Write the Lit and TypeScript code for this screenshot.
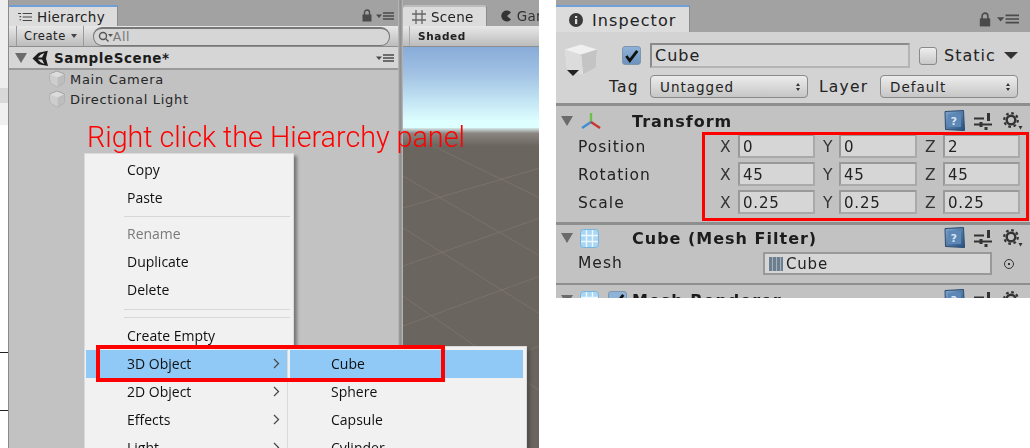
import {LitElement, html, css, svg} from 'lit';
import {customElement} from 'lit/decorators.js';

const cube = html`<svg class="cube" width="18" height="18" viewBox="0 0 18 18">
  <path d="M9 1 16.500 4 16 13 9.500 17 2.500 13 1.500 4Z" fill="#dcdcdc" stroke="#a4a4a4"/>
  <path d="M1.500 4 9.500 7.500V17L2.500 13Z" fill="#cdcdcd"/>
  <path d="M9.500 7.500 16.500 4 16 13 9.500 17Z" fill="#bdbdbd"/>
</svg>`;

const unityLogo = html`<svg width="17" height="17" viewBox="0 0 17 17">
  <path d="M.5 8.500 6.500 2.800 9 4.600 5.800 7.400H10L12.300 3 9 4.500 6.500 2.800 15.800.8 14 8.500 16 16 6.500 14.200 9 12.400 12.300 14 10 9.600H5.800L9 12.400 6.500 14.200Z" fill="#1c1c1c"/>
</svg>`;

const lock = html`<svg width="10" height="13" viewBox="0 0 10 13">
  <path d="M2.500 6V3.500a2.500 2.500 0 0 1 5 0V6" fill="none" stroke="#4a4a4a" stroke-width="1.400"/>
  <rect x=".5" y="5.500" width="9" height="7" fill="#4a4a4a"/>
</svg>`;

const paneMenu = html`<svg width="18" height="8" viewBox="0 0 18 8">
  <path d="M0 2.500H6L3 6Z" fill="#4a4a4a"/>
  <path d="M7 1H18M7 4H18M7 7H18" stroke="#4a4a4a" stroke-width="1.300"/>
</svg>`;

const gear = html`<svg width="20" height="19" viewBox="0 0 20 19">
  <circle cx="8" cy="8" r="4.300" fill="none" stroke="#333" stroke-width="2.400"/>
  <circle cx="8" cy="8" r="6.800" fill="none" stroke="#333" stroke-width="2.200" stroke-dasharray="2.700 2.640"/>
  <path d="M15.500 14H19.500L17.500 17.500Z" fill="#333"/>
</svg>`;

const sliders = html`<svg width="18" height="17" viewBox="0 0 18 17">
  <path d="M0 5.500H10M0 11.500H18" stroke="#333" stroke-width="2"/>
  <path d="M14.500 0V8M12 14V17M7 9V14" stroke="#333" stroke-width="3"/>
</svg>`;

const help = html`<svg width="21" height="22" viewBox="0 0 21 22">
  <defs><linearGradient id="hb" x1="0" y1="0" x2="1" y2="1">
    <stop offset="0" stop-color="#7ea7d1"/><stop offset="1" stop-color="#26507f"/>
  </linearGradient></defs>
  <path d="M1 1.500 19.500.5 20.500 20.500 1.500 19.500Z" fill="url(#hb)" stroke="#2c4a6e"/>
  <rect x="4" y="4" width="13" height="13" fill="#5d88b6"/>
  <text x="10.500" y="15" font-size="11" font-family="DejaVu Sans" fill="#dbe7f3" text-anchor="middle">?</text>
</svg>`;

const meshIcon = html`<svg width="19" height="19" viewBox="0 0 19 19">
  <rect x=".5" y=".5" width="18" height="18" rx="3" fill="#a9d6f2" stroke="#76b4e0"/>
  <path d="M6.500 1V18M12.500 1V18M1 6.500H18M1 12.500H18" stroke="#eef8ff" stroke-width="1.400"/>
</svg>`;

const transformIcon = html`<svg width="22" height="20" viewBox="0 0 22 20">
  <path d="M11 11V2" stroke="#6cc04a" stroke-width="2.400"/>
  <path d="M11 11 2 17" stroke="#3f8fd2" stroke-width="2.400"/>
  <path d="M11 11 20 17" stroke="#c8342e" stroke-width="2.400"/>
</svg>`;

const tick = html`<svg width="15" height="14" viewBox="0 0 13 12">
  <path d="M2 6 5 10 11.500 1.500" fill="none" stroke="#111" stroke-width="2.400"/>
</svg>`;

const chevron = html`<svg width="7" height="11" viewBox="0 0 7 11">
  <path d="M1 1 5.500 5.500 1 10" fill="none" stroke="#4a4a4a" stroke-width="1.300"/>
</svg>`;

const gridLines = [
  'M0 62 137 22', 'M0 120 137 72', 'M0 180 137 130', 'M0 250 137 200',
  'M30 0 137 52', 'M0 30 137 110', 'M0 82 137 168', 'M0 150 137 245', 'M0 225 60 270',
].map((d) => svg`<path d=${d} stroke="#7a726a" stroke-width="1" fill="none"/>`);

const mainMenu = [
  {label: 'Copy'},
  {label: 'Paste'},
  {sep: 'one'},
  {label: 'Rename', off: true},
  {label: 'Duplicate'},
  {label: 'Delete'},
  {sep: 'two'},
  {sep: 'three'},
  {label: 'Create Empty'},
  {label: '3D Object', sub: true, on: true},
  {label: '2D Object', sub: true},
  {label: 'Effects', sub: true},
  {label: 'Light', sub: true},
];

const subMenu = ['Cube', 'Sphere', 'Capsule', 'Cylinder'];

const vectors = [
  {name: 'Position', v: ['0', '0', '2']},
  {name: 'Rotation', v: ['45', '45', '45']},
  {name: 'Scale', v: ['0.25', '0.25', '0.25']},
];

@customElement('app-root')
export class AppRoot extends LitElement {
  static styles = css`
    :host {
      display: flex;
      gap: 17px;
      width: 1030px;
      height: 448px;
      overflow: hidden;
      background: #fff;
      font-family: 'DejaVu Sans', sans-serif;
      color: #222;
    }
    .shot {
      position: relative;
      width: 539px;
      height: 448px;
      display: flex;
      flex: none;
      overflow: hidden;
    }
    .soft {
      display: flex;
      flex: 1;
      min-width: 0;
      filter: blur(0.35px);
    }
    .desk {
      width: 8px;
      flex: none;
      display: flex;
      flex-direction: column;
      background: #fff;
      border-right: 1px solid #8a8a8a;
    }
    .desk div { flex: none; }
    .desk .a { height: 88px; background: #eeeeee; }
    .desk .b { height: 15px; background: #d8d8d8; }
    .desk .c { height: 22px; background: #f0f0f0; }
    .desk .d { height: 227px; background: #fff; }
    .desk .line { height: 1px; background: #222; margin-bottom: 57px; }
    .hier {
      width: 389px;
      flex: none;
      display: flex;
      flex-direction: column;
      background: #c2c2c2;
    }
    .gutter {
      width: 5px;
      flex: none;
      background: linear-gradient(90deg, #c2c2c2, #8c8c8c 40%, #9c9c9c 70%, #bdbdbd);
    }
    .scene {
      flex: 1;
      min-width: 0;
      display: flex;
      flex-direction: column;
      background: #6b655f;
    }
    .tabs {
      height: 26px;
      flex: none;
      display: flex;
      align-items: flex-end;
      justify-content: space-between;
      background: #a2a2a2;
      box-sizing: border-box;
    }
    .tab {
      height: 21px;
      box-sizing: border-box;
      display: flex;
      align-items: center;
      gap: 5px;
      background: #dcdcdc;
      border-top: 2px solid #6f9fd6;
      border-right: 1px solid #8c8c8c;
      font-size: 13.500px;
      letter-spacing: 0.3px;
      padding: 0 12px 0 9px;
    }
    .tab.plain { border-top-color: #bdbdbd; border-radius: 3px 3px 0 0; }
    .tab.other {
      background: none;
      border: 0;
      padding: 0 0 0 14px;
      color: #333;
    }
    .tools {
      height: 21px;
      display: flex;
      align-items: center;
      gap: 4px;
      margin: 0 4px 0 0;
    }
    .bar {
      height: 21px;
      flex: none;
      box-sizing: border-box;
      display: flex;
      align-items: center;
      background: linear-gradient(#e8e8e8, #bcbcbc);
      border-bottom: 1px solid #8e8e8e;
      font-size: 11.500px;
      font-weight: 500;
      letter-spacing: 0.6px;
    }
    .create {
      height: 100%;
      display: flex;
      align-items: center;
      gap: 5px;
      margin-left: 7px;
      padding: 0 6px 0 7px;
      border-left: 1px solid #9a9a9a;
      border-right: 1px solid #9a9a9a;
    }
    .caret {
      width: 0;
      height: 0;
      border-left: 3px solid transparent;
      border-right: 3px solid transparent;
      border-top: 4px solid #444;
    }
    .search {
      flex: 1;
      height: 16px;
      margin: 0 8px 0 9px;
      display: flex;
      align-items: center;
      gap: 0;
      padding-left: 4px;
      border: 1px solid #777;
      border-top-width: 2px;
      border-radius: 9px;
      background: #d6d6d6;
      color: #777;
      font-size: 12.500px;
      font-weight: 400;
    }
    .scene-row {
      height: 23px;
      flex: none;
      box-sizing: border-box;
      display: flex;
      align-items: center;
      gap: 5px;
      padding: 1px 4px 0 6px;
      background: #d6d6d6;
      border-bottom: 2px solid #9a9a9a;
      font-size: 13.500px;
      font-weight: 700;
      letter-spacing: 0.55px;
      color: #1c1c1c;
    }
    .scene-row .grow { flex: 1; }
    .tri {
      width: 0;
      height: 0;
      flex: none;
      border-left: 6px solid transparent;
      border-right: 6px solid transparent;
      border-top: 10px solid #6b6b6b;
    }
    .node {
      height: 20px;
      flex: none;
      box-sizing: border-box;
      display: flex;
      align-items: center;
      gap: 4px;
      padding: 0 0 2px 39px;
      font-size: 13px;
      letter-spacing: 0.7px;
      color: #262626;
    }
    .shaded {
      height: 100%;
      display: flex;
      align-items: center;
      padding-left: 8px;
      border-left: 1px solid #a8a8a8;
      margin-left: 6px;
      font-weight: 700;
      font-size: 10.500px;
      letter-spacing: 0.6px;
    }
    .sky {
      height: 81px;
      flex: none;
      background: linear-gradient(#88acd9, #a3c3e4 35%, #ddffff 92%);
    }
    .horizon {
      height: 18px;
      flex: none;
      background: linear-gradient(#d4e8e8, #8a8580 30%, #6b655f);
    }
    .ground { flex: 1; background: #6b655f; overflow: hidden; }
    .ground svg { display: block; }
    .menu {
      position: absolute;
      box-sizing: border-box;
      background: #f1f1f1;
      border: 1px solid #dadada;
      box-shadow: 3px 3px 3px rgba(60, 60, 60, 0.55);
      font-family: 'Open Sans', 'Noto Sans', sans-serif;
      font-size: 14px;
      color: #111;
    }
    .menu.main { left: 84px; top: 153px; width: 210px; height: 320px; padding: 2px 1px; }
    .menu.sub { left: 287px; top: 346px; width: 240px; height: 120px; padding: 3px 3px 3px 2px; }
    .mi {
      height: 28px;
      display: flex;
      align-items: center;
      justify-content: space-between;
      box-sizing: border-box;
      padding: 0 12px 2px 41px;
    }
    .menu.sub .mi { padding-left: 41px; }
    .mi.off { color: #7a7a7a; }
    .mi.on { background: #90c8f6; }
    .ms {
      height: 1px;
      margin-left: 38px;
      margin-right: 2px;
      background: #d7d7d7;
    }
    .ms.one { margin-top: 4px; margin-bottom: 3px; }
    .ms.two { margin-top: 5px; margin-bottom: 7px; }
    .ms.three { margin-bottom: 4px; }
    .note {
      position: absolute;
      left: 87px;
      top: 120px;
      font-family: 'Roboto', 'Liberation Sans', sans-serif;
      font-weight: 300;
      font-size: 28.700px;
      line-height: 34px;
      color: #f00;
      white-space: nowrap;
    }
    .mark {
      position: absolute;
      box-sizing: border-box;
      border: 3px solid #f00;
    }
    .mark.menu-mark { left: 96px; top: 345px; width: 349px; height: 37px; border-width: 4px; }
    .mark.xyz-mark { left: 146px; top: 132px; width: 327px; height: 89px; }

    .insp {
      position: relative;
      flex: none;
      width: 474px;
      height: 298px;
      overflow: hidden;
      background: #c2c2c2;
      display: flex;
      flex-direction: column;
      font-size: 13px;
      letter-spacing: 0.6px;
    }
    .insp .tabs { height: 32px; padding-right: 11px; }
    .insp .tab {
      height: 27px;
      font-size: 16px;
      letter-spacing: 1.1px;
      padding: 1px 12px 0 13px;
      gap: 9px;
    }
    .insp .tab svg { display: block; }
    .right-icons { display: flex; align-items: center; gap: 6px; height: 26px; }
    .right-icons svg:first-child { width: 12px; height: 15px; }
    .right-icons svg:last-child { width: 22px; height: 10px; }
    .head {
      height: 74px;
      flex: none;
      box-sizing: border-box;
      display: flex;
      align-items: flex-start;
      gap: 9px;
      padding: 11px 0 0 7px;
      background: #d3d3d3;
      border-bottom: 3px solid #8e8e8e;
    }
    .big { position: relative; width: 36px; flex: none; }
    .big svg { display: block; }
    .big .drop {
      position: absolute;
      left: 4px;
      top: 27px;
      border-left: 6px solid transparent;
      border-right: 6px solid transparent;
      border-top: 6px solid #222;
    }
    .head-rows { flex: 1; display: flex; flex-direction: column; gap: 7px; }
    .hr { display: flex; align-items: center; }
    .check {
      width: 19px;
      height: 19px;
      flex: none;
      box-sizing: border-box;
      margin: 0 9px 0 14px;
      border: 1px solid #7f95ad;
      border-radius: 3px;
      background: linear-gradient(#8fb2d8, #6c92bd);
      display: flex;
      align-items: center;
      justify-content: center;
    }
    .name {
      width: 260px;
      height: 25px;
      flex: none;
      box-sizing: border-box;
      padding-left: 3px;
      display: flex;
      align-items: center;
      border: 2px solid #8a8a8a;
      border-bottom-color: #b4b4b4;
      border-right-color: #b4b4b4;
      background: #d6d6d6;
      font-size: 16px;
      letter-spacing: 1px;
    }
    .static-box {
      width: 18px;
      height: 18px;
      flex: none;
      box-sizing: border-box;
      margin: 0 7px 0 9px;
      border: 1px solid #8a8a8a;
      border-radius: 3px;
      background: linear-gradient(#eee, #c8c8c8);
    }
    .static-label { font-size: 16px; letter-spacing: 1px; }
    .static-drop {
      margin-left: 8px;
      border-left: 7px solid transparent;
      border-right: 7px solid transparent;
      border-top: 7px solid #333;
    }
    .lbl { font-size: 15.500px; letter-spacing: 1.200px; flex: none; }
    .tag-lbl { width: 33px; margin: 0 8px 0 1px; }
    .layer-lbl { width: 50px; }
    .drop-field {
      height: 23px;
      flex: none;
      box-sizing: border-box;
      display: flex;
      align-items: center;
      justify-content: space-between;
      padding: 0 7px 0 9px;
      border: 1px solid #8a8a8a;
      border-radius: 4px;
      background: linear-gradient(#ececec, #c6c6c6);
      font-size: 13.500px;
      letter-spacing: 1px;
    }
    .drop-field.tag { width: 158px; margin-right: 11px; }
    .drop-field.layer { width: 138px; margin-left: 11px; }
    .updown { display: flex; flex-direction: column; gap: 2px; }
    .updown i {
      display: block;
      border-left: 2.500px solid transparent;
      border-right: 2.500px solid transparent;
    }
    .updown i:first-child { border-bottom: 3px solid #333; }
    .updown i:last-child { border-top: 3px solid #333; }
    .comp-head {
      height: 27px;
      flex: none;
      box-sizing: border-box;
      display: flex;
      align-items: center;
      padding: 3px 7px 0 5px;
      font-weight: 700;
      font-size: 16px;
      letter-spacing: 1px;
      color: #1c1c1c;
    }
    .comp-head.tight { height: 25px; padding-top: 1px; }
    .comp-head .tri { margin-right: 7px; }
    .comp-head .ico { width: 22px; flex: none; display: flex; align-items: center; }
    .comp-head .nm { flex: 1; padding-left: 30px; white-space: nowrap; }
    .comp-head .tools-r { display: flex; align-items: center; flex: none; }
    .comp-head .tools-r svg:nth-child(1) { margin-right: 9px; }
    .comp-head .tools-r svg:nth-child(2) { margin-right: 11px; }
    .vec-rows {
      height: 92px;
      flex: none;
      box-sizing: border-box;
      display: flex;
      flex-direction: column;
      gap: 4px;
      padding-top: 1px;
      border-bottom: 3px solid #8e8e8e;
    }
    .vec {
      display: grid;
      grid-template-columns: 142px 18px 77px 24px 78px 26px 77px;
      height: 24px;
      align-items: center;
      padding-left: 22px;
      font-size: 15.500px;
      letter-spacing: 1px;
    }
    .vec > span { box-sizing: border-box; padding-top: 2px; }
    .axis { font-size: 15.500px; color: #333; letter-spacing: 0; }
    .vec > .axis.gap { padding-left: 8px; }
    .vec > .cell {
      height: 24px;
      padding: 1px 0 0 3px;
      display: flex;
      align-items: center;
      border: 2px solid #999;
      border-bottom-color: #aaa;
      border-right-color: #aaa;
      background: #d6d6d6;
      font-size: 15px;
      letter-spacing: 0.8px;
    }
    .mesh-row {
      height: 35px;
      flex: none;
      box-sizing: border-box;
      display: flex;
      align-items: flex-start;
      padding: 2px 0 0 22px;
      border-bottom: 2px solid #8e8e8e;
      font-size: 15.500px;
      letter-spacing: 1px;
    }
    .mesh-row .t { width: 185px; flex: none; line-height: 23px; }
    .mesh-field {
      width: 229px;
      height: 23px;
      flex: none;
      box-sizing: border-box;
      display: flex;
      align-items: center;
      gap: 3px;
      padding-left: 4px;
      border: 2px solid #999;
      background: #d6d6d6;
      margin-right: 12px;
      font-size: 15px;
      letter-spacing: 0.8px;
    }
    .picker {
      width: 10px;
      height: 10px;
      margin-top: 7px;
      flex: none;
      box-sizing: border-box;
      border: 1.500px solid #333;
      border-radius: 50%;
      display: flex;
      align-items: center;
      justify-content: center;
    }
    .picker::after { content: ''; width: 2px; height: 2px; background: #333; }
    .mini-grid {
      width: 14px;
      height: 14px;
      flex: none;
      background: repeating-linear-gradient(90deg, #6b7f90 0 3px, #a4b0ba 3px 4px);
    }
    .mini-check {
      width: 19px;
      height: 19px;
      box-sizing: border-box;
      margin: 0 -25px 0 6px;
      border: 1px solid #7f95ad;
      border-radius: 3px;
      background: #8fb2d8;
      flex: none;
      display: flex;
      align-items: center;
      justify-content: center;
    }
  `;

  private renderComp(icon: unknown, name: string, tight = false, after?: unknown) {
    return html`<div class="comp-head ${tight ? 'tight' : ''}">
      <span class="tri"></span><span class="ico">${icon}</span>${after}
      <span class="nm">${name}</span>
      <span class="tools-r">${help}${sliders}${gear}</span>
    </div>`;
  }

  render() {
    return html`
      <div class="shot">
        <div class="soft">
          <div class="desk">
            <div class="a"></div><div class="b"></div><div class="c"></div>
            <div class="d"></div>
            <div class="line"></div><div class="line"></div>
          </div>
          <div class="hier">
            <div class="tabs">
              <div class="tab">
                <svg width="14" height="12" viewBox="0 0 18 12"><path d="M6 1.500H18M6 6H18M6 10.500H18M0 1.500H4M2 5.500H4M2 9.500H4" stroke="#444" stroke-width="1.400"/></svg>
                Hierarchy
              </div>
              <div class="tools">${lock}${paneMenu}</div>
            </div>
            <div class="bar">
              <div class="create">Create <span class="caret"></span></div>
              <div class="search">
                <svg width="15" height="11" viewBox="0 0 15 11"><circle cx="5" cy="5" r="3.500" fill="none" stroke="#555" stroke-width="1.400"/><path d="M8 8 10.500 10.500" stroke="#555" stroke-width="1.400"/><path d="M10 3H15L12.500 6Z" fill="#555"/></svg>
                All
              </div>
            </div>
            <div class="scene-row">
              <span class="tri"></span>${unityLogo}
              <span class="grow">SampleScene*</span>
              ${paneMenu}
            </div>
            <div class="node">${cube}Main Camera</div>
            <div class="node">${cube}Directional Light</div>
          </div>
          <div class="gutter"></div>
          <div class="scene">
            <div class="tabs">
              <div class="tab plain">
                <svg width="14" height="14" viewBox="0 0 14 14"><path d="M4 0V14M10 0V14M0 4H14M0 10H14" stroke="#666" stroke-width="1.300"/></svg>
                Scene
              </div>
              <div class="tab other">
                <svg width="11" height="12" viewBox="0 0 11 12"><path d="M10 2.500A5.500 5.500 0 1 0 10 9.500L6 6Z" fill="#333"/></svg>
                Game
              </div>
            </div>
            <div class="bar"><div class="shaded">Shaded</div></div>
            <div class="sky"></div>
            <div class="horizon"></div>
            <div class="ground">
              <svg width="137" height="300" viewBox="0 0 137 300">${gridLines}</svg>
            </div>
          </div>
        </div>

        <div class="menu main">
          ${mainMenu.map((m) => m.sep
            ? html`<div class="ms ${m.sep}"></div>`
            : html`<div class="mi ${m.off ? 'off' : ''} ${m.on ? 'on' : ''}">
                <span>${m.label}</span>${m.sub ? chevron : ''}
              </div>`)}
        </div>
        <div class="menu sub">
          ${subMenu.map((s, i) => html`<div class="mi ${i === 0 ? 'on' : ''}">${s}</div>`)}
        </div>
        <div class="note">Right click the Hierarchy panel</div>
        <div class="mark menu-mark"></div>
      </div>

      <div class="insp">
        <div class="tabs">
          <div class="tab">
            <svg width="14" height="14" viewBox="0 0 14 14"><circle cx="7" cy="7" r="7" fill="#3a3a3a"/><rect x="6" y="6" width="2.200" height="5" fill="#ddd"/><rect x="6" y="3" width="2.200" height="2" fill="#ddd"/></svg>
            Inspector
          </div>
          <div class="right-icons">${lock}${paneMenu}</div>
        </div>
        <div class="head">
          <div class="big">
            <svg width="36" height="33" viewBox="0 0 36 32">
              <path d="M18 1 34 6 33 24 20 31 4 25 2 6Z" fill="#f0f0f0"/>
              <path d="M18 11 34 6 33 24 20 31Z" fill="#c4c4c4"/>
              <path d="M2 6 18 11 20 31 4 25Z" fill="#dcdcdc"/>
            </svg>
            <span class="drop"></span>
          </div>
          <div class="head-rows">
            <div class="hr">
              <span class="check">${tick}</span>
              <span class="name">Cube</span>
              <span class="static-box"></span>
              <span class="static-label">Static</span>
              <span class="static-drop"></span>
            </div>
            <div class="hr">
              <span class="lbl tag-lbl">Tag</span>
              <span class="drop-field tag">Untagged<span class="updown"><i></i><i></i></span></span>
              <span class="lbl layer-lbl">Layer</span>
              <span class="drop-field layer">Default<span class="updown"><i></i><i></i></span></span>
            </div>
          </div>
        </div>
        ${this.renderComp(transformIcon, 'Transform')}
        <div class="vec-rows">
          ${vectors.map((r) => html`<div class="vec">
            <span>${r.name}</span>
            <span class="axis">X</span><span class="cell">${r.v[0]}</span>
            <span class="axis gap">Y</span><span class="cell">${r.v[1]}</span>
            <span class="axis gap">Z</span><span class="cell">${r.v[2]}</span>
          </div>`)}
        </div>
        ${this.renderComp(meshIcon, 'Cube (Mesh Filter)', true)}
        <div class="mesh-row">
          <span class="t">Mesh</span>
          <span class="mesh-field"><span class="mini-grid"></span>Cube</span>
          <span class="picker"></span>
        </div>
        ${this.renderComp(meshIcon, 'Mesh Renderer', false, html`<span class="mini-check">${tick}</span>`)}
        <div class="mark xyz-mark"></div>
      </div>
    `;
  }
}
